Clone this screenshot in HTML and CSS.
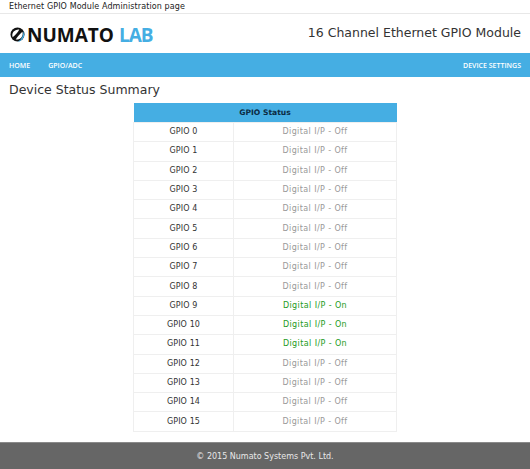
FILE: index.html
```html
<!DOCTYPE html>
<html lang="en">

<head>
    <meta charset="UTF-8">
    <title>Ethernet GPIO Module</title>
    <link rel="stylesheet" href="styles.css">
</head>

<body>
    <div class="topbar">Ethernet GPIO Module Administration page</div>
    <header class="header">
        <div class="logo">
            <svg class="logo-mark" width="15" height="15" viewBox="0 0 15 15">
                <circle cx="7.500" cy="7.500" r="7" fill="#111"/>
                <path d="M2.600 10.300C1.300 6 4.200 2.200 9.300 2.500C8 5 5.500 7.800 2.600 10.300Z" fill="#fff"/>
                <path d="M12.400 4.700C13.700 9 10.800 12.800 5.700 12.500C7 10 9.500 7.200 12.400 4.700Z" fill="#fff"/>
                <path d="M13.600 4C15.800 8.500 13 14 7.500 14.800C10.800 13.200 13.300 9.500 13.600 4Z" fill="#45aee3"/>
            </svg>
            <span class="logo-name">NUMATO</span>
            <span class="logo-lab">LAB</span>
        </div>
        <div class="module-name">16 Channel Ethernet GPIO Module</div>
    </header>
    <nav class="nav">
        <ul>
            <li><a href="#">HOME</a></li>
            <li><a href="#">GPIO/ADC</a></li>
        </ul>
        <a href="#">DEVICE SETTINGS</a>
    </nav>
    <h1 class="title">Device Status Summary</h1>
    <table class="status">
        <colgroup>
            <col class="col-name">
            <col>
        </colgroup>
        <thead>
            <tr><th colspan="2">GPIO Status</th></tr>
        </thead>
        <tbody>
            <tr><td>GPIO 0</td><td class="off">Digital I/P - Off</td></tr>
            <tr><td>GPIO 1</td><td class="off">Digital I/P - Off</td></tr>
            <tr><td>GPIO 2</td><td class="off">Digital I/P - Off</td></tr>
            <tr><td>GPIO 3</td><td class="off">Digital I/P - Off</td></tr>
            <tr><td>GPIO 4</td><td class="off">Digital I/P - Off</td></tr>
            <tr><td>GPIO 5</td><td class="off">Digital I/P - Off</td></tr>
            <tr><td>GPIO 6</td><td class="off">Digital I/P - Off</td></tr>
            <tr><td>GPIO 7</td><td class="off">Digital I/P - Off</td></tr>
            <tr><td>GPIO 8</td><td class="off">Digital I/P - Off</td></tr>
            <tr><td>GPIO 9</td><td class="on">Digital I/P - On</td></tr>
            <tr><td>GPIO 10</td><td class="on">Digital I/P - On</td></tr>
            <tr><td>GPIO 11</td><td class="on">Digital I/P - On</td></tr>
            <tr><td>GPIO 12</td><td class="off">Digital I/P - Off</td></tr>
            <tr><td>GPIO 13</td><td class="off">Digital I/P - Off</td></tr>
            <tr><td>GPIO 14</td><td class="off">Digital I/P - Off</td></tr>
            <tr><td>GPIO 15</td><td class="off">Digital I/P - Off</td></tr>
        </tbody>
    </table>
    <footer class="footer">© 2015 Numato Systems Pvt. Ltd.</footer>
</body>

</html>
```

FILE: styles.css
```css
html,
body,
ul,
li,
h1,
table,
th,
td {
    margin: 0;
    padding: 0;
}

ul {
    list-style: none;
}

a {
    color: #fff;
    text-decoration: none;
}

body {
    font-family: "DejaVu Sans", sans-serif;
    color: #333;
    background: #fff;
    height: 469px;
    overflow: hidden;
}

.topbar {
    height: 13px;
    line-height: 13px;
    padding-left: 9px;
    font-size: 8px;
    letter-spacing: 0.1px;
    color: #222;
    border-bottom: 1px solid #e8e8e8;
}

.header {
    height: 39px;
    padding: 0 9px;
    display: flex;
    justify-content: space-between;
    align-items: center;
}

.logo {
    display: flex;
    align-items: center;
    font-family: "Open Sans", sans-serif;
    font-size: 19px;
    line-height: 24px;
    padding-top: 2px;
    padding-left: 1px;
}

.logo-mark {
    margin-right: 2px;
}

.logo-name {
    font-weight: 700;
    color: #111;
    margin-right: 5px;
}

.logo-lab {
    font-weight: 700;
    letter-spacing: -1px;
    color: #45aee3;
}

.module-name {
    font-size: 12.500px;
    color: #333;
    padding-bottom: 2px;
}

.nav {
    height: 24px;
    padding: 0 9px;
    background: #45aee3;
    display: flex;
    justify-content: space-between;
    align-items: center;
    font-family: "Open Sans", sans-serif;
    font-size: 7px;
    font-weight: 600;
}

.nav ul {
    display: flex;
    gap: 18px;
}

.title {
    height: 26px;
    line-height: 25px;
    padding-left: 9px;
    font-size: 12.500px;
    font-weight: normal;
    color: #333;
}

.status {
    width: 264px;
    margin: 0 auto;
    border-collapse: collapse;
    table-layout: fixed;
    font-size: 8px;
    letter-spacing: 0.1px;
}

.col-name {
    width: 100px;
}

.status th {
    height: 19px;
    background: #45aee3;
    color: #0c2c44;
    font-size: 7.600px;
    font-weight: bold;
    letter-spacing: 0;
    text-align: center;
}

.status td {
    height: 19.300px;
    padding-bottom: 1px;
    box-sizing: border-box;
    text-align: center;
    border: 1px solid #efefef;
    color: #333;
}

.status td.off {
    color: #999;
    letter-spacing: 0.4px;
}

.status td.on {
    color: #1d9b1d;
    letter-spacing: 0.4px;
}

.footer {
    margin-top: 10px;
    height: 28px;
    line-height: 27px;
    background: #666;
    border-top: 1px solid #8a8a8a;
    box-sizing: border-box;
    text-align: center;
    font-size: 8px;
    color: #e8e8e8;
}
```
